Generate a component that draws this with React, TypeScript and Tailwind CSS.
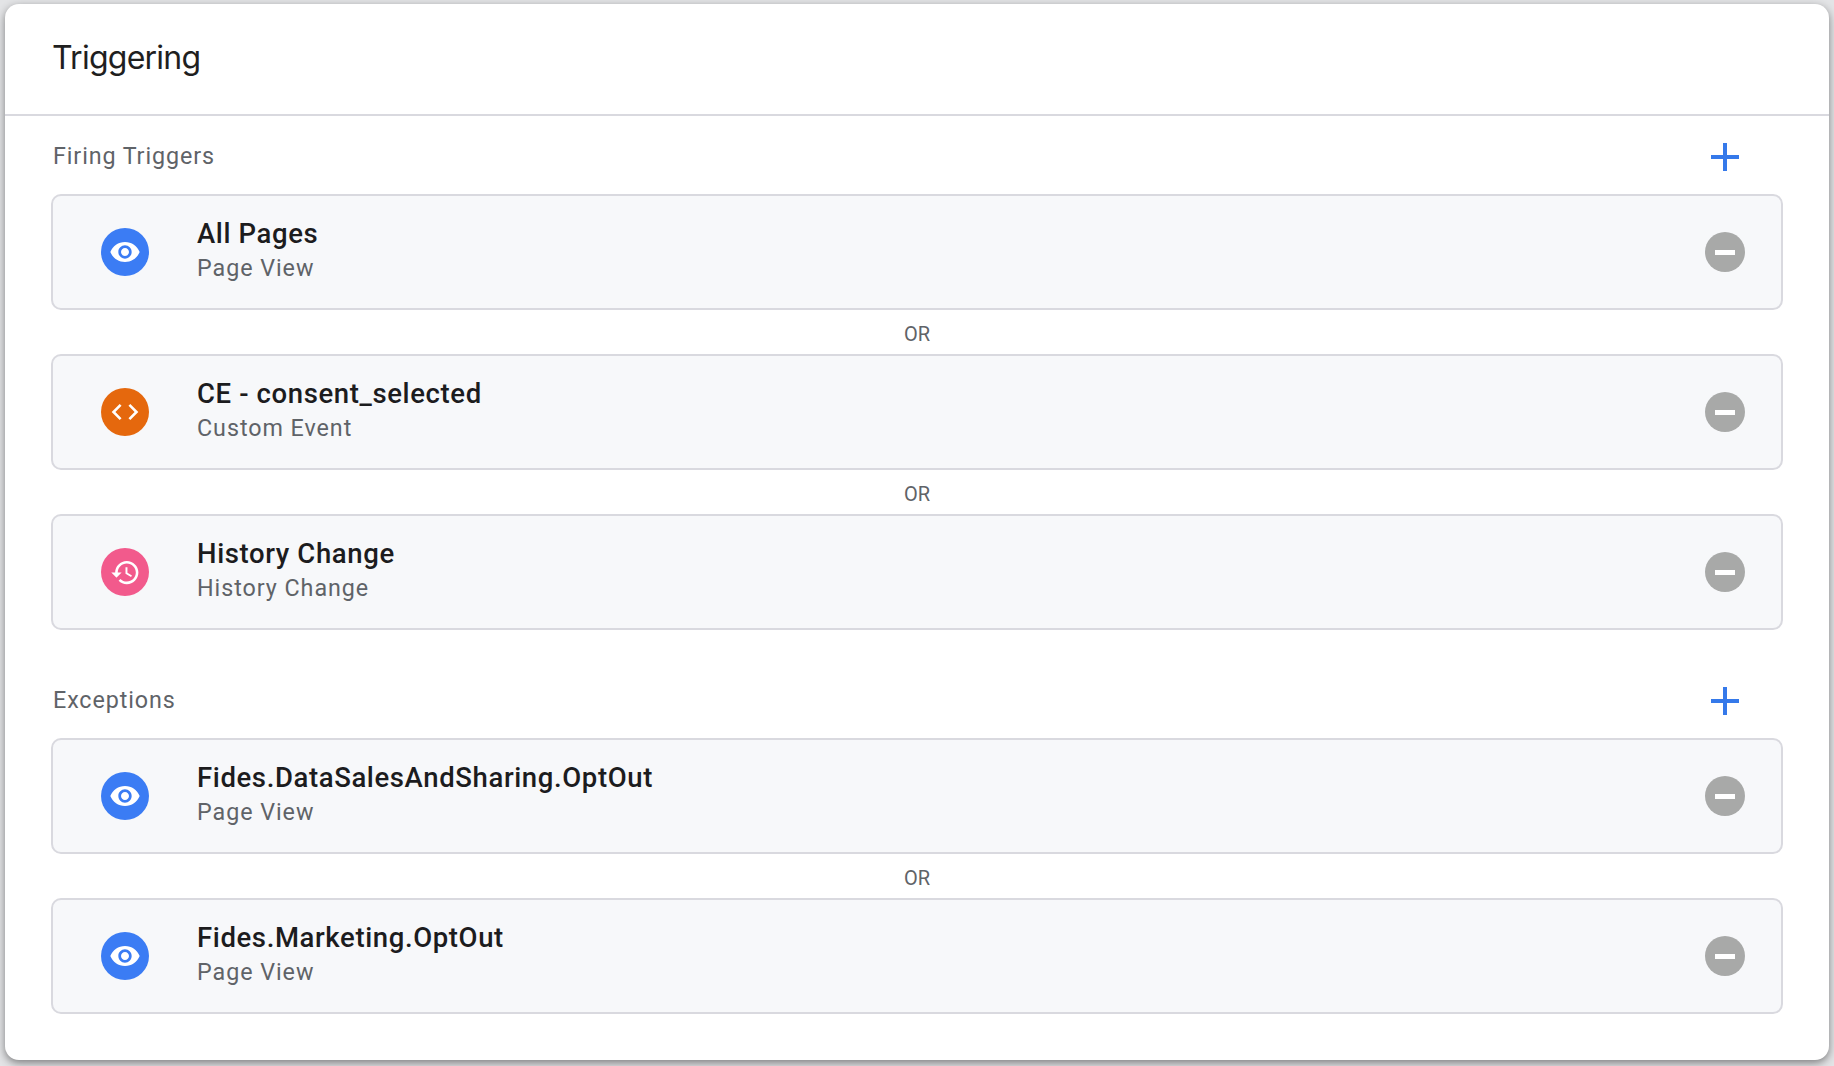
import React from 'react';

type TriggerKind = 'pageview' | 'custom' | 'history';

interface Trigger {
  name: string;
  type: string;
  kind: TriggerKind;
}

const firing: Trigger[] = [
  { name: 'All Pages', type: 'Page View', kind: 'pageview' },
  { name: 'CE - consent_selected', type: 'Custom Event', kind: 'custom' },
  { name: 'History Change', type: 'History Change', kind: 'history' },
];

const exceptions: Trigger[] = [
  { name: 'Fides.DataSalesAndSharing.OptOut', type: 'Page View', kind: 'pageview' },
  { name: 'Fides.Marketing.OptOut', type: 'Page View', kind: 'pageview' },
];

function TriggerIcon({ kind }: { kind: TriggerKind }) {
  if (kind === 'custom') {
    return (
      <div className="w-12 h-12 rounded-full bg-[#e5680d] flex items-center justify-center shrink-0">
        <svg viewBox="0 0 24 24" className="w-8 h-8 fill-white">
          <path d="M9.4 16.6L4.8 12l4.6-4.6L8 6l-6 6 6 6 1.4-1.4zm5.2 0l4.6-4.6-4.6-4.6L16 6l6 6-6 6-1.4-1.4z" />
        </svg>
      </div>
    );
  }
  if (kind === 'history') {
    return (
      <div className="w-12 h-12 rounded-full bg-[#f25a8c] flex items-center justify-center shrink-0">
        <svg viewBox="0 0 24 24" className="w-[31px] h-[31px] fill-white">
          <path d="M13 3c-4.97 0-9 4.03-9 9H1l3.89 3.89.07.14L9 12H6c0-3.87 3.13-7 7-7s7 3.13 7 7-3.13 7-7 7c-1.93 0-3.68-.79-4.94-2.06l-1.42 1.42C8.27 19.99 10.51 21 13 21c4.97 0 9-4.03 9-9s-4.03-9-9-9zm-1 5v5l4.28 2.54.72-1.21-3.5-2.08V8H12z" />
        </svg>
      </div>
    );
  }
  return (
    <div className="w-12 h-12 rounded-full bg-[#3b7cf4] flex items-center justify-center shrink-0">
      <svg viewBox="0 0 24 24" className="w-8 h-8 fill-white">
        <path d="M12 4.5C7 4.5 2.73 7.61 1 12c1.73 4.39 6 7.5 11 7.5s9.27-3.11 11-7.5c-1.73-4.39-6-7.5-11-7.5zM12 17c-2.76 0-5-2.24-5-5s2.24-5 5-5 5 2.24 5 5-2.24 5-5 5zm0-8c-1.66 0-3 1.34-3 3s1.34 3 3 3 3-1.34 3-3-1.34-3-3-3z" />
      </svg>
    </div>
  );
}

function TriggerRow({ trigger }: { trigger: Trigger }) {
  return (
    <div className="h-[116px] flex items-center bg-[#f7f8fa] border-2 border-[#d9d9df] rounded-[10px] pl-12 pr-[36px]">
      <TriggerIcon kind={trigger.kind} />
      <div className="ml-12 flex-1 pb-[2px]">
        <div className="text-[27.5px] leading-[34px] font-medium text-[#1c1c1e] tracking-[0.62px]">{trigger.name}</div>
        <div className="text-[23.3px] leading-[34px] text-[#5f6368] tracking-[0.95px]">{trigger.type}</div>
      </div>
      <div className="w-10 h-10 rounded-full bg-[#a8a9a8] flex items-center justify-center shrink-0">
        <div className="w-5 h-[5px] bg-white" />
      </div>
    </div>
  );
}

function TriggerList({ items }: { items: Trigger[] }) {
  return (
    <div className="mx-[46px]">
      {items.map((t, i) => (
        <div key={t.name}>
          {i > 0 && (
            <div className="h-11 pt-[4px] flex items-center justify-center text-[20px] text-[#5f6368]">OR</div>
          )}
          <TriggerRow trigger={t} />
        </div>
      ))}
    </div>
  );
}

function SectionHeader({ label }: { label: string }) {
  return (
    <div className="flex items-center justify-between pl-[48px] pr-[90px] h-[78px]">
      <span className="pt-[2px] text-[23.3px] text-[#5f6368] tracking-[0.9px]">{label}</span>
      <svg viewBox="0 0 28 28" className="mt-[3px] w-7 h-7 fill-[#3579ea]">
        <rect x="12" y="0" width="4" height="28" />
        <rect x="0" y="12" width="28" height="4" />
      </svg>
    </div>
  );
}

export default function App() {
  return (
    <div className="w-[1834px] h-[1066px] overflow-hidden bg-[#e3e4e6] pt-1 px-[5px] font-['Roboto',sans-serif]">
      <div className="h-[1056px] bg-white rounded-[14px] shadow-[0_3px_8px_rgba(0,0,0,0.45)]">
        {/* Header */}
        <div className="h-[112px] border-b-2 border-[#d9d9df] flex items-start pl-[47px] pt-[30px]">
          <h1 className="text-[32px] leading-[48px] tracking-[-0.75px] text-[#1f1f1f] font-['Inter',sans-serif]">Triggering</h1>
        </div>

        <SectionHeader label="Firing Triggers" />
        <TriggerList items={firing} />

        <div className="mt-[30px]">
          <SectionHeader label="Exceptions" />
          <TriggerList items={exceptions} />
        </div>
      </div>
    </div>
  );
}
